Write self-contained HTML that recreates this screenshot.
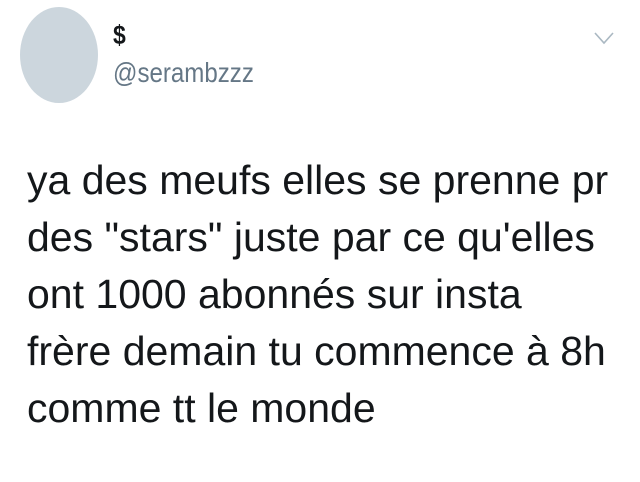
<!DOCTYPE html>
<html><head><style>
html,body{margin:0;padding:0;background:#fff;width:640px;height:482px;overflow:hidden;font-family:"Liberation Sans",Arial,sans-serif;}
.av{position:absolute;left:20px;top:7px;width:78px;height:96px;border-radius:50%;background:#ccd6dd;}
.name{position:absolute;left:113px;top:20px;font-size:27px;font-weight:bold;color:#14171a;transform:scaleX(0.85);transform-origin:left top;}
.handle{position:absolute;left:113px;top:57px;font-size:28px;color:#657786;transform:scaleX(0.86);transform-origin:left top;}
.chev{position:absolute;left:592px;top:28px;}
.body{position:absolute;left:27px;top:152px;font-size:41px;line-height:57px;color:#14171a;transform:scaleX(1.0);transform-origin:left top;white-space:nowrap;}
</style></head><body>
<div class="av"></div>
<div class="name">$</div>
<div class="handle">@serambzzz</div>
<svg class="chev" width="24" height="20" viewBox="0 0 24 20"><path d="M3 5 L12 15 L21 5" fill="none" stroke="#aab8c2" stroke-width="1.6"/></svg>
<div class="body">ya des meufs elles se prenne pr<br>des "stars" juste par ce qu'elles<br>ont 1000 abonnés sur insta<br>frère demain tu commence à 8h<br>comme tt le monde</div>
</body></html>
